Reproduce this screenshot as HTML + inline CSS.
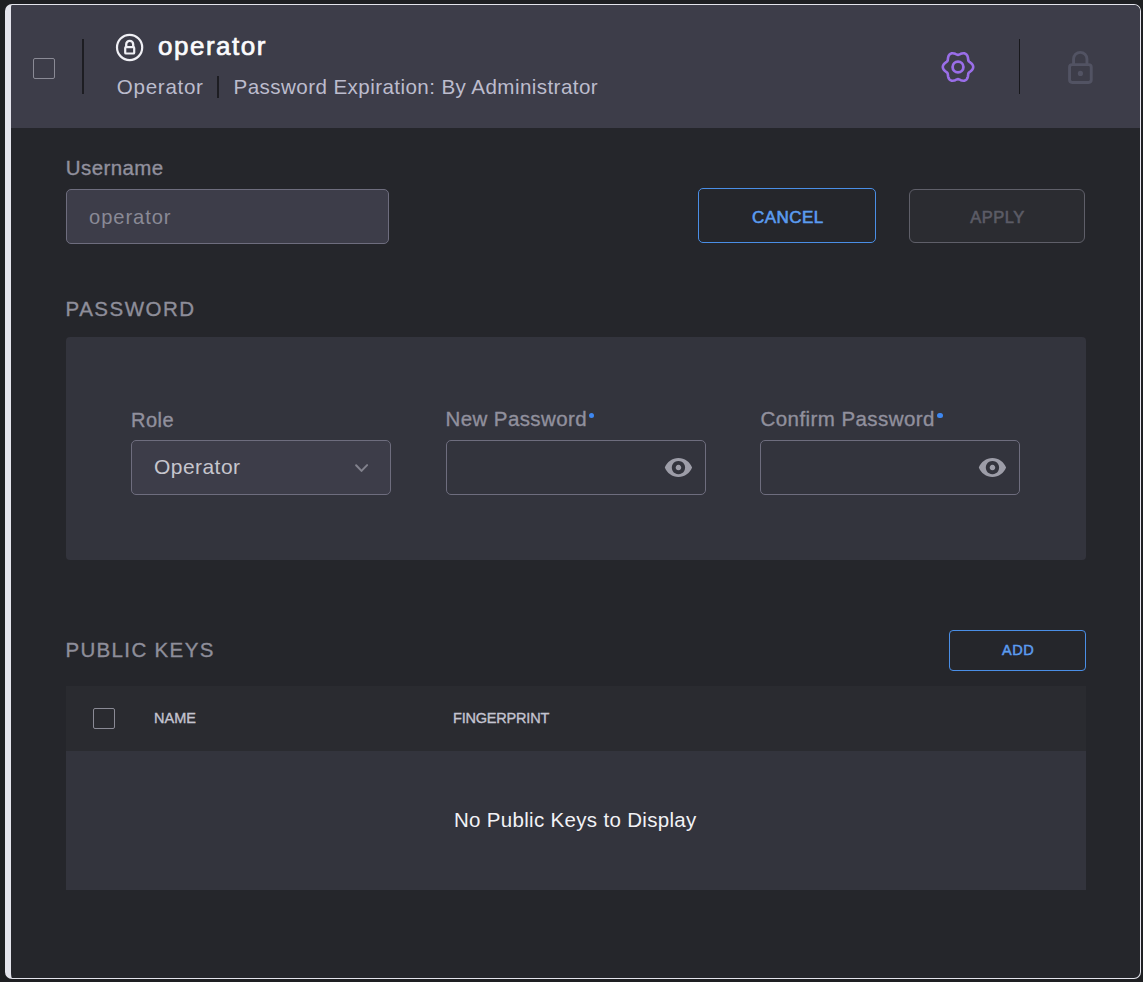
<!DOCTYPE html>
<html>
<head>
<meta charset="utf-8">
<style>
html,body{margin:0;padding:0;width:1143px;height:982px;overflow:hidden;background:#1e1f22;}
body{position:relative;font-family:"Liberation Sans",sans-serif;}
.abs{position:absolute;}
.t{position:absolute;white-space:nowrap;line-height:1;}
#card{position:absolute;left:5px;top:4px;width:1129px;height:973px;border:1px solid #e4e4ec;border-left:6px solid #e4e4ec;border-radius:7px;background:#25262b;overflow:hidden;}
#hdr{position:absolute;left:0;top:0;width:100%;height:123px;background:#3d3d49;}
.vdiv{position:absolute;width:2px;background:#1d1d22;}
.cb{position:absolute;box-sizing:border-box;border:1.5px solid #8a8a95;border-radius:2px;}
.inp{position:absolute;box-sizing:border-box;border:1px solid #6e6d7e;border-radius:5px;}
.lbl{color:#91909d;font-size:20.5px;-webkit-text-stroke:0.35px #91909d;}
.btn{position:absolute;box-sizing:border-box;border-radius:4px;}
</style>
</head>
<body>
<div id="card"><div id="hdr"></div></div>

<!-- header -->
<div class="cb" style="left:33px;top:58px;width:22px;height:21px;"></div>
<div class="vdiv" style="left:82px;top:39px;height:55px;"></div>
<svg class="abs" style="left:115px;top:33px" width="30" height="30" viewBox="0 0 30 30">
  <circle cx="14.6" cy="14.45" r="12.6" fill="none" stroke="#f0f0f5" stroke-width="2.2"/>
  <path d="M11.2 14.3 V11.4 A3.5 3.5 0 0 1 18.2 11.4 V14.3" fill="none" stroke="#f0f0f5" stroke-width="2.3"/>
  <rect x="10.2" y="14.1" width="9" height="6.4" rx="0.8" fill="none" stroke="#f0f0f5" stroke-width="2.2"/>
</svg>
<div class="t" style="left:158px;top:32.5px;font-size:26px;color:#fbfbfd;letter-spacing:1.5px;-webkit-text-stroke:0.7px #fbfbfd;">operator</div>
<div class="t" style="left:116.8px;top:77px;font-size:20.6px;color:#bcbccd;letter-spacing:0.7px;">Operator</div>
<div class="vdiv" style="left:217px;top:76px;height:22px;"></div>
<div class="t" style="left:233.6px;top:77px;font-size:20.6px;color:#bcbccd;letter-spacing:0.415px;">Password Expiration: By Administrator</div>

<svg class="abs" style="left:940.4px;top:49.3px" width="36" height="36" viewBox="0 0 36 36">
  <path d="M33.20,18.00 L33.14,18.66 L32.98,19.31 L32.70,19.94 L32.34,20.53 L31.90,21.08 L31.41,21.59 L30.88,22.06 L30.33,22.49 L29.79,22.89 L29.29,23.26 L28.84,23.64 L28.48,24.05 L28.31,24.57 L28.20,25.14 L28.13,25.77 L28.05,26.44 L27.95,27.12 L27.81,27.81 L27.62,28.50 L27.36,29.16 L27.03,29.77 L26.62,30.31 L26.14,30.78 L25.60,31.16 L25.00,31.45 L24.35,31.62 L23.68,31.70 L22.98,31.68 L22.28,31.58 L21.59,31.41 L20.92,31.18 L20.28,30.92 L19.67,30.66 L19.09,30.41 L18.53,30.21 L18.00,30.10 L17.47,30.21 L16.91,30.41 L16.33,30.66 L15.72,30.92 L15.08,31.18 L14.41,31.41 L13.72,31.58 L13.02,31.68 L12.32,31.70 L11.65,31.62 L11.00,31.45 L10.40,31.16 L9.86,30.78 L9.38,30.31 L8.97,29.77 L8.64,29.16 L8.38,28.50 L8.19,27.81 L8.05,27.12 L7.95,26.44 L7.87,25.77 L7.80,25.14 L7.69,24.57 L7.52,24.05 L7.16,23.64 L6.71,23.26 L6.21,22.89 L5.67,22.49 L5.12,22.06 L4.59,21.59 L4.10,21.08 L3.66,20.53 L3.30,19.94 L3.02,19.31 L2.86,18.66 L2.80,18.00 L2.86,17.34 L3.02,16.69 L3.30,16.06 L3.66,15.47 L4.10,14.92 L4.59,14.41 L5.12,13.94 L5.67,13.51 L6.21,13.11 L6.71,12.74 L7.16,12.36 L7.52,11.95 L7.69,11.43 L7.80,10.86 L7.87,10.23 L7.95,9.56 L8.05,8.88 L8.19,8.19 L8.38,7.50 L8.64,6.84 L8.97,6.23 L9.38,5.69 L9.86,5.22 L10.40,4.84 L11.00,4.55 L11.65,4.38 L12.32,4.30 L13.02,4.32 L13.72,4.42 L14.41,4.59 L15.08,4.82 L15.72,5.08 L16.33,5.34 L16.91,5.59 L17.47,5.79 L18.00,5.90 L18.53,5.79 L19.09,5.59 L19.67,5.34 L20.28,5.08 L20.92,4.82 L21.59,4.59 L22.28,4.42 L22.98,4.32 L23.68,4.30 L24.35,4.38 L25.00,4.55 L25.60,4.84 L26.14,5.22 L26.62,5.69 L27.03,6.23 L27.36,6.84 L27.62,7.50 L27.81,8.19 L27.95,8.88 L28.05,9.56 L28.13,10.23 L28.20,10.86 L28.31,11.43 L28.48,11.95 L28.84,12.36 L29.29,12.74 L29.79,13.11 L30.33,13.51 L30.88,13.94 L31.41,14.41 L31.90,14.92 L32.34,15.47 L32.70,16.06 L32.98,16.69 L33.14,17.34Z" fill="none" stroke="#9a6ee8" stroke-width="2.6" stroke-linejoin="round"/>
  <circle cx="18" cy="18" r="5.4" fill="none" stroke="#9a6ee8" stroke-width="2.8"/>
</svg>
<div class="vdiv" style="left:1019px;top:39px;height:55px;width:1px;background:#18181c;"></div>
<svg class="abs" style="left:1060px;top:46px" width="40" height="44" viewBox="0 0 40 44">
  <rect x="9.55" y="18.65" width="21.7" height="17.8" rx="2.6" fill="none" stroke="#525363" stroke-width="2.9"/>
  <path d="M13.55 18.65 V13.05 A6.7 6.7 0 0 1 26.95 13.05 V18.65" fill="none" stroke="#525363" stroke-width="2.9"/>
  <circle cx="20.4" cy="27.4" r="2.6" fill="#525363"/>
</svg>

<!-- username -->
<div class="t lbl" style="left:65.8px;top:157.8px;letter-spacing:0.4px;">Username</div>
<div class="inp" style="left:66px;top:189px;width:323px;height:55px;background:#3d3d49;"></div>
<div class="t" style="left:89px;top:206.5px;font-size:20.2px;color:#8a8a96;letter-spacing:0.9px;">operator</div>

<div class="btn" style="left:698px;top:188px;width:178px;height:55px;border:1px solid #4a8ee6;border-radius:5px;"></div>
<div class="t" style="left:752px;top:208.5px;font-size:17px;color:#5b9cf0;-webkit-text-stroke:0.6px #5b9cf0;letter-spacing:0.45px;">CANCEL</div>
<div class="btn" style="left:909px;top:189px;width:176px;height:54px;border:1px solid #5f5f69;background:#2b2c31;border-radius:6px;"></div>
<div class="t" style="left:970.2px;top:208.9px;font-size:16.5px;color:#5c5c66;-webkit-text-stroke:0.6px #5c5c66;letter-spacing:0.5px;">APPLY</div>

<!-- password -->
<div class="t lbl" style="left:65.5px;top:299px;letter-spacing:1.5px;color:#8e8e9a;-webkit-text-stroke:0.35px #8e8e9a;">PASSWORD</div>
<div class="abs" style="left:66px;top:337px;width:1020px;height:223px;background:#33343d;border-radius:4px;"></div>

<div class="t lbl" style="left:131px;top:409.5px;font-size:20px;letter-spacing:0.5px;">Role</div>
<div class="inp" style="left:131px;top:440px;width:260px;height:55px;background:#3d3d49;"></div>
<div class="t" style="left:154px;top:455.8px;font-size:21px;color:#c6c6ce;letter-spacing:0.45px;">Operator</div>
<svg class="abs" style="left:348px;top:456px" width="28" height="24" viewBox="0 0 28 24">
  <path d="M8.1 9.2 L13.5 14.9 L19.1 9.1" fill="none" stroke="#82828d" stroke-width="2" stroke-linecap="round" stroke-linejoin="round"/>
</svg>

<div class="t lbl" style="left:445.5px;top:409px;letter-spacing:0.4px;">New Password</div>
<div class="abs" style="left:588.9px;top:412.9px;width:5.2px;height:5.2px;border-radius:50%;background:#3e87f0;"></div>
<div class="inp" style="left:446px;top:440px;width:260px;height:55px;"></div>
<svg class="abs" style="left:664px;top:457px" width="29" height="21" viewBox="0 0 29 21">
  <path fill="#9d9da8" fill-rule="evenodd" d="M0.8,10.55 C2.95,4.96 8.25,1 14.45,1 C20.65,1 25.95,4.96 28.1,10.55 C25.95,16.14 20.65,20.1 14.45,20.1 C8.25,20.1 2.95,16.14 0.8,10.55 Z M14.45,3.9 a6.65,6.65 0 1 0 0.001,0 Z M14.45,7.8 a2.75,2.75 0 1 0 0.001,0 Z"/>
</svg>

<div class="t lbl" style="left:760.5px;top:409px;letter-spacing:0.43px;">Confirm Password</div>
<div class="abs" style="left:937.4px;top:412.9px;width:5.2px;height:5.2px;border-radius:50%;background:#3e87f0;"></div>
<div class="inp" style="left:760px;top:440px;width:260px;height:55px;"></div>
<svg class="abs" style="left:978px;top:457px" width="29" height="21" viewBox="0 0 29 21">
  <path fill="#9d9da8" fill-rule="evenodd" d="M0.8,10.55 C2.95,4.96 8.25,1 14.45,1 C20.65,1 25.95,4.96 28.1,10.55 C25.95,16.14 20.65,20.1 14.45,20.1 C8.25,20.1 2.95,16.14 0.8,10.55 Z M14.45,3.9 a6.65,6.65 0 1 0 0.001,0 Z M14.45,7.8 a2.75,2.75 0 1 0 0.001,0 Z"/>
</svg>

<!-- public keys -->
<div class="t lbl" style="left:65.4px;top:639.7px;letter-spacing:1.35px;color:#8e8e9a;-webkit-text-stroke:0.35px #8e8e9a;">PUBLIC KEYS</div>
<div class="btn" style="left:949px;top:630px;width:137px;height:41px;border:1px solid #4a8ee6;"></div>
<div class="t" style="left:1002px;top:642.9px;font-size:14.5px;color:#5b9cf0;-webkit-text-stroke:0.5px #5b9cf0;letter-spacing:0.6px;">ADD</div>

<div class="abs" style="left:66px;top:686px;width:1020px;height:65px;background:#2a2b30;"></div>
<div class="abs" style="left:66px;top:751px;width:1020px;height:139px;background:#33343d;"></div>
<div class="cb" style="left:93px;top:708px;width:22px;height:21px;"></div>
<div class="t" style="left:154.1px;top:711px;font-size:14.5px;color:#c4c4d0;-webkit-text-stroke:0.35px #c4c4d0;">NAME</div>
<div class="t" style="left:453px;top:711px;font-size:14.5px;color:#c4c4d0;-webkit-text-stroke:0.35px #c4c4d0;letter-spacing:-0.2px;">FINGERPRINT</div>
<div class="t" style="left:453.9px;top:809.9px;font-size:20.5px;color:#f2f2f6;letter-spacing:0.32px;">No Public Keys to Display</div>

</body>
</html>
